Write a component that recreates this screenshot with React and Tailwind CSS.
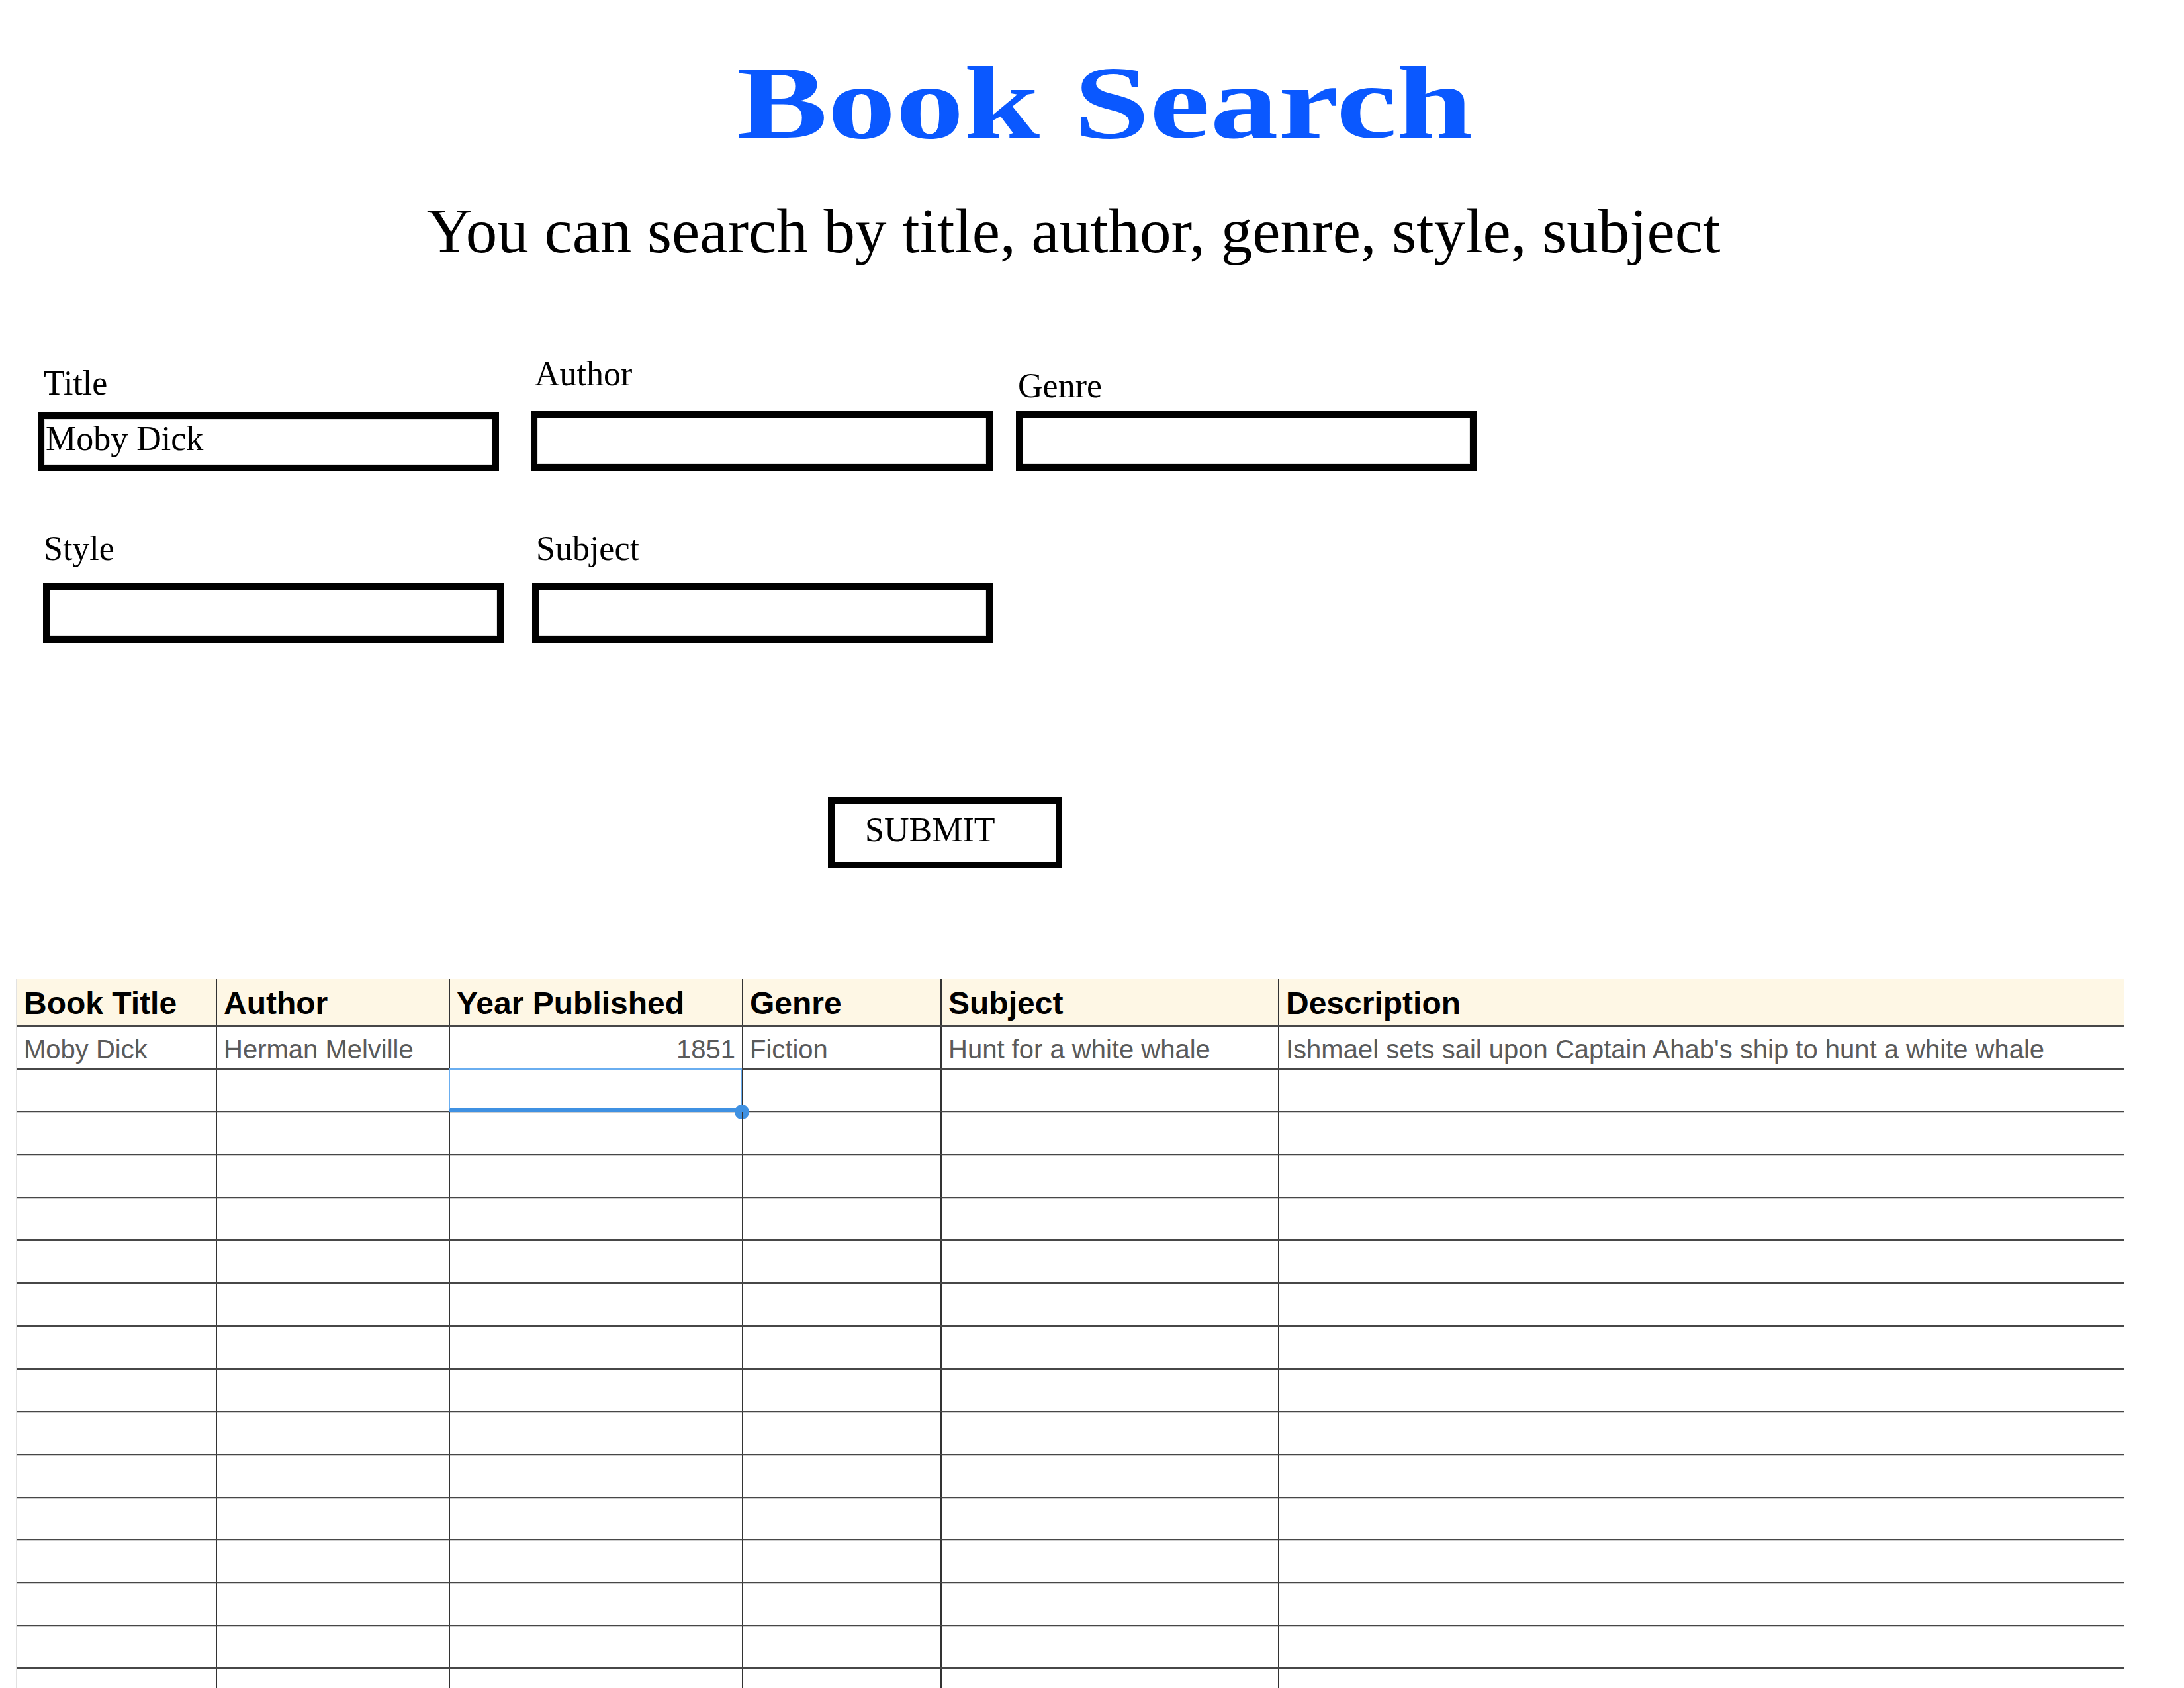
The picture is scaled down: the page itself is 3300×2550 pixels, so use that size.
import React from "react";

const columns = [
  { key: "title", label: "Book Title" },
  { key: "author", label: "Author" },
  { key: "year", label: "Year Published", right: true },
  { key: "genre", label: "Genre" },
  { key: "subject", label: "Subject" },
  { key: "description", label: "Description" }
];

const books = [
  {
    title: "Moby Dick",
    author: "Herman Melville",
    year: "1851",
    genre: "Fiction",
    subject: "Hunt for a white whale",
    description: "Ishmael sets sail upon Captain Ahab's ship to hunt a white whale"
  }
];

const Field = ({ label, value = "", wrap, labelCls, boxCls }) => (
  <div className={`flex flex-col ${wrap}`}>
    <label className={`text-[52px] leading-none ${labelCls}`}>{label}</label>
    <input
      readOnly
      value={value}
      className={`w-full border-[10px] border-black bg-white pl-[2px] pt-[3px] pb-[14px] text-[52px] leading-none text-black outline-none shadow-[inset_0_0_0_1px_#e4e4e4] ${boxCls}`}
    />
  </div>
);

const App = () => {
  // 1 filled row + empty rows down to the bottom of the page
  const rows = [...books, ...Array.from({ length: 16 }, () => null)];

  return (
    <div className="relative w-[3300px] h-[2550px] overflow-hidden bg-white text-black font-['Liberation_Serif','Times_New_Roman',serif]">
      {/* Heading */}
      <h1 className="pt-[78px] pl-[38px] text-center text-[156px] leading-none font-bold text-[#0a58ff]">
        <span className="inline-block scale-x-[1.32]">Book Search</span>
      </h1>
      <p className="mt-[68px] pr-[56px] text-center text-[95px] leading-none">
        You can search by title, author, genre, style, subject
      </p>

      {/* Search form */}
      <form className="mt-[142px]" onSubmit={(e) => e.preventDefault()}>
        <div className="flex items-start">
          <Field
            label="Title"
            value="Moby Dick"
            wrap="ml-[57px] w-[697px]"
            labelCls="ml-[9px] mt-[14px] mb-[18px]"
            boxCls="h-[89px]"
          />
          <Field
            label="Author"
            wrap="ml-[48px] w-[698px]"
            labelCls="ml-[6px] mb-[30px]"
            boxCls="h-[90px]"
          />
          <Field
            label="Genre"
            wrap="ml-[35px] w-[696px]"
            labelCls="ml-[3px] mt-[18px] mb-[12px]"
            boxCls="h-[90px]"
          />
        </div>

        <div className="mt-[91px] flex items-start">
          <Field
            label="Style"
            wrap="ml-[65px] w-[696px]"
            labelCls="ml-[1px] mb-[26px]"
            boxCls="h-[90px]"
          />
          <Field
            label="Subject"
            wrap="ml-[43px] w-[696px]"
            labelCls="ml-[6px] mb-[26px]"
            boxCls="h-[90px]"
          />
        </div>

        <button
          type="submit"
          className="mt-[233px] ml-[1251px] flex h-[108px] w-[354px] items-start border-[10px] border-black bg-white pl-[46px] pt-[14px] text-[52px] leading-none text-black"
        >
          SUBMIT
        </button>
      </form>

      {/* Results sheet */}
      <div className="mt-[167px] ml-[24px] w-[3186px] border-l-2 border-[#e2e2e2] font-['Liberation_Sans',Arial,sans-serif]">
        <div className="grid h-[72px] grid-cols-[302px_352px_443px_300px_510px_1277px] bg-[#fef7e5] border-b-2 border-[#474747] shadow-[0_1px_0_#cfcfcf]">
          {columns.map((col, i) => (
            <div
              key={col.key}
              className={`flex items-center pt-[4px] pl-[10px] text-[48px] leading-none font-bold text-black ${
                i < columns.length - 1 ? "border-r-2 border-[#333333]" : ""
              }`}
            >
              {col.label}
            </div>
          ))}
        </div>

        {rows.map((book, r) => (
          <div
            key={r}
            className="grid h-[64.7px] grid-cols-[302px_352px_443px_300px_510px_1277px] border-b-2 border-[#474747] shadow-[0_1px_0_#cfcfcf]"
          >
            {columns.map((col, i) => (
              <div
                key={col.key}
                className={`relative flex items-center pt-[5px] px-[10px] text-[40px] leading-none whitespace-nowrap text-[#5a5a5a] ${
                  col.right ? "justify-end" : ""
                } ${i < columns.length - 1 ? "border-r-2 border-[#333333]" : ""}`}
              >
                {book ? book[col.key] : ""}
                {r === 1 && col.key === "year" && (
                  <>
                    <div className="absolute -top-[2px] -left-[2px] right-0 -bottom-[2px] border-2 border-[#6aaef0] border-b-[6px] border-b-[#3f91e2]" />
                    <div className="absolute -right-[11px] -bottom-[13px] h-[22px] w-[22px] rounded-full bg-[#3f91e2]" />
                  </>
                )}
              </div>
            ))}
          </div>
        ))}
      </div>
    </div>
  );
};

export default App;
